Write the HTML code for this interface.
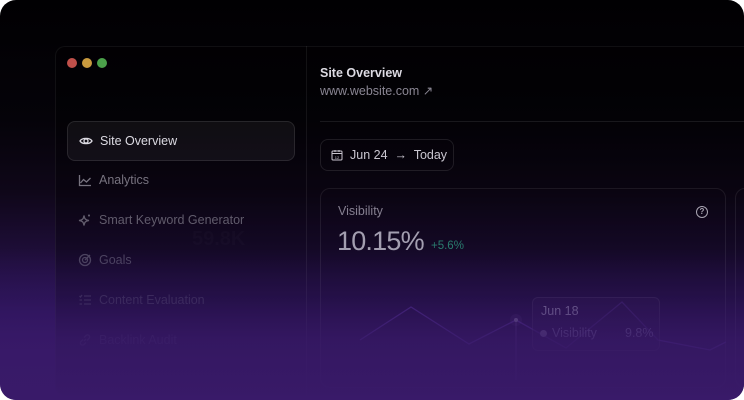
<!DOCTYPE html>
<html><head><style>
*{margin:0;padding:0;box-sizing:border-box}
html,body{width:744px;height:400px;background:#fff;overflow:hidden;font-family:"Liberation Sans",sans-serif}
.bg{position:absolute;left:0;top:0;width:744px;height:400px;border-radius:16px;overflow:hidden;background:linear-gradient(180deg,#010002 0%,#050309 30%,#0f0719 48%,#1d0d36 62%,#2c145a 78%,#371866 90%,#391a69 100%)}
.win{position:absolute;left:55px;top:46px;width:720px;height:350px;border:1px solid rgba(255,255,255,0.06);border-radius:10px;background:rgba(0,0,0,0.3)}
.div{position:absolute;left:306px;top:46px;width:1px;height:350px;background:rgba(255,255,255,0.07)}
.dot{position:absolute;top:58px;width:10px;height:10px;border-radius:50%}
.item{position:absolute;left:67px;width:228px;height:40px;display:flex;align-items:center;padding-left:11px;font-size:12.5px;color:#8a8694}
.item svg{width:14px;height:14px;margin-right:7px;stroke:currentColor;fill:none;stroke-width:1.3}
.sel{border:1px solid rgba(255,255,255,0.1);border-radius:8px;background:rgba(255,255,255,0.05);color:#dcdae2}
.t{position:absolute;color:#fff;white-space:nowrap}
.ov{position:absolute;left:0;top:0;width:744px;height:400px;background:linear-gradient(180deg,rgba(56,25,104,0) 0%,rgba(56,25,104,0) 62%,rgba(52,23,98,0.4) 75%,rgba(56,25,104,0.8) 85%,rgba(57,26,105,0.97) 100%)}
</style></head><body>
<div class="bg">
<div class="win"></div>
<div class="div"></div>
<div class="dot" style="left:67px;background:#c0504a"></div>
<div class="dot" style="left:82px;background:#c99a3e"></div>
<div class="dot" style="left:97px;background:#4ba14a"></div>

<div class="item sel" style="top:121px"><svg viewBox="0 0 14 14"><path d="M1 7C3 3.5 11 3.5 13 7C11 10.5 3 10.5 1 7Z"/><circle cx="7" cy="7" r="2"/></svg>Site Overview</div>
<div class="item" style="top:160px;color:#77737f"><svg viewBox="0 0 14 14"><path d="M1.5 2v10.5H13M2.5 10l3-3.5 3 2.5 4-4"/></svg>Analytics</div>
<div class="item" style="top:200px;color:#615c6c"><svg viewBox="0 0 14 14"><path d="M6 2.5C6.5 6 7.5 7 11 7.5C7.5 8 6.5 9 6 12.5C5.5 9 4.5 8 1 7.5C4.5 7 5.5 6 6 2.5Z"/><path d="M11 1.5v2M10 2.5h2"/></svg>Smart Keyword Generator</div>
<div class="item" style="top:240px;color:#4e4760"><svg viewBox="0 0 14 14"><circle cx="7" cy="7" r="5.5"/><circle cx="7" cy="7" r="2.5"/><path d="M7 7l5-5"/></svg>Goals</div>
<div class="item" style="top:280px;color:#40365a"><svg viewBox="0 0 14 14"><path d="M6 3h7M6 7h7M6 11h7M1.5 3l1 1 1.5-2M1.5 7h2.5M1.5 11h2.5"/></svg>Content Evaluation</div>
<div class="item" style="top:320px;color:#3c2c5e"><svg viewBox="0 0 14 14"><path d="M6 8l2-2M5 6.5L3 8.5a2 2 0 003 3L8 9.5M9 7.5l2-2a2 2 0 00-3-3L6 4.5"/></svg>Backlink Audit</div>
<div class="t" style="left:192px;top:228px;font-size:20px;color:rgba(255,255,255,0.02);font-weight:bold">59.8K</div>

<div class="t" style="left:320px;top:66px;font-size:12.5px;font-weight:bold;color:#dddbe3">Site Overview</div>
<div class="t" style="left:320px;top:83px;font-size:12.5px;color:#8a8693">www.website.com ↗</div>
<div style="position:absolute;left:320px;top:121px;width:424px;height:1px;background:rgba(255,255,255,0.09)"></div>
<div style="position:absolute;left:320px;top:139px;width:134px;height:32px;border:1px solid rgba(255,255,255,0.1);border-radius:8px;display:flex;align-items:center;padding-left:10px;font-size:12.5px;color:#c9c6d0;white-space:nowrap">
<svg width="12" height="12" viewBox="0 0 12 12" style="margin-right:7px" fill="none" stroke="#c9c6d0" stroke-width="1"><rect x="1" y="2" width="10" height="9" rx="1"/><path d="M1 4.5h10M4 1v2M8 1v2"/><text x="6" y="10" font-size="4" text-anchor="middle" fill="#c9c6d0" stroke="none">12</text></svg>Jun 24 &nbsp;→&nbsp; Today</div>

<div style="position:absolute;left:320px;top:188px;width:406px;height:200px;border:1px solid rgba(255,255,255,0.08);border-radius:10px"></div>
<div style="position:absolute;left:735px;top:188px;width:40px;height:200px;border:1px solid rgba(255,255,255,0.08);border-radius:10px"></div>
<div class="t" style="left:338px;top:204px;font-size:12.5px;color:#857f90">Visibility</div>
<div class="t" style="left:337px;top:226px;font-size:27px;color:#a39eb0;letter-spacing:-0.8px">10.15%</div>
<div class="t" style="left:431px;top:240px;font-size:11.5px;color:#2a7c6e">+5.6%</div>
<div style="position:absolute;left:696px;top:206px;width:12px;height:12px;border:1.2px solid #a9a5b2;border-radius:50%;font-size:8px;color:#a9a5b2;text-align:center;line-height:10px;font-weight:bold">?</div>
<svg style="position:absolute;left:320px;top:270px" width="406" height="120" fill="none">
<path d="M40 70L91 37L149 74L196 50L246 78L302 32L338 70L390 80L410 70" stroke="#4a2a85" stroke-width="1.3"/>
<line x1="196" y1="50" x2="196" y2="110" stroke="#4a3070" stroke-width="1"/>
<circle cx="196" cy="50" r="6" fill="rgba(120,90,170,0.15)"/><circle cx="196" cy="50" r="2" fill="#7a6a98"/>
</svg>
<div style="position:absolute;left:532px;top:297px;width:128px;height:54px;border:1px solid rgba(255,255,255,0.08);border-radius:6px;background:rgba(40,20,70,0.5)"></div>
<div class="t" style="left:541px;top:304px;font-size:12.5px;color:#8e85a6">Jun 18</div>
<div style="position:absolute;left:540px;top:330px;width:7px;height:7px;border-radius:50%;background:#6a5a88"></div>
<div class="t" style="left:552px;top:326px;font-size:12.5px;color:#6e6090">Visibility</div>
<div class="t" style="left:625px;top:326px;font-size:12.5px;color:#6e6090">9.8%</div>
<div class="ov"></div>
</div>
</body></html>
